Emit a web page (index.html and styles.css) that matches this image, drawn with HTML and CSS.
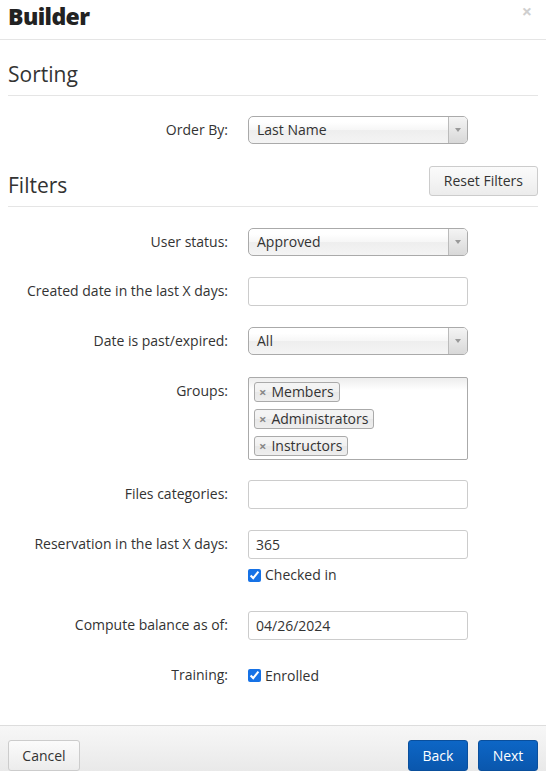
FILE: index.html
```html
<!DOCTYPE html>
<html lang="en">
<head>
<meta charset="utf-8">
<title>Builder</title>
<link rel="stylesheet" href="styles.css">
</head>
<body>
<div class="modal">
  <div class="modal-header">
    <h1 class="title">Builder</h1>
    <button class="close" type="button">×</button>
  </div>
  <div class="modal-body">
    <div class="section-head sorting"><h2>Sorting</h2></div>
    <div class="row row-order">
      <label class="lbl">Order By:</label>
      <div class="ctl"><div class="select"><span class="val">Last Name</span><span class="arrow"><b></b></span></div></div>
    </div>

    <div class="section-head filters"><h2>Filters</h2><button class="btn reset" type="button">Reset Filters</button></div>

    <div class="row">
      <label class="lbl">User status:</label>
      <div class="ctl"><div class="select"><span class="val">Approved</span><span class="arrow"><b></b></span></div></div>
    </div>
    <div class="row">
      <label class="lbl">Created date in the last X days:</label>
      <div class="ctl"><input class="input" type="text" value=""></div>
    </div>
    <div class="row row-date">
      <label class="lbl">Date is past/expired:</label>
      <div class="ctl"><div class="select"><span class="val">All</span><span class="arrow"><b></b></span></div></div>
    </div>
    <div class="row row-groups">
      <label class="lbl">Groups:</label>
      <div class="ctl">
        <div class="multi">
          <span class="tag"><i>×</i>Members</span>
          <span class="tag"><i>×</i>Administrators</span>
          <span class="tag"><i>×</i>Instructors</span>
        </div>
      </div>
    </div>
    <div class="row">
      <label class="lbl">Files categories:</label>
      <div class="ctl"><input class="input" type="text" value=""></div>
    </div>
    <div class="row">
      <label class="lbl">Reservation in the last X days:</label>
      <div class="ctl">
        <input class="input" type="text" value="365">
        <label class="check sub"><input type="checkbox" checked><span>Checked in</span></label>
      </div>
    </div>
    <div class="row">
      <label class="lbl">Compute balance as of:</label>
      <div class="ctl"><input class="input" type="text" value="04/26/2024"></div>
    </div>
    <div class="row row-training">
      <label class="lbl">Training:</label>
      <div class="ctl"><label class="check inline"><input type="checkbox" checked><span>Enrolled</span></label></div>
    </div>
  </div>
  <div class="modal-footer">
    <button class="btn cancel" type="button">Cancel</button>
    <div class="right">
      <button class="btn primary" type="button">Back</button>
      <button class="btn primary" type="button">Next</button>
    </div>
  </div>
</div>
</body>
</html>
```

FILE: styles.css
```css
* { box-sizing: border-box; }
html, body { margin: 0; padding: 0; }
body {
  font-family: "Open Sans", "Liberation Sans", sans-serif;
  font-size: 14px;
  color: #333;
  background: #fff;
}
.modal {
  display: flex;
  flex-direction: column;
  min-height: 100vh;
}
.modal-header {
  display: flex;
  justify-content: space-between;
  align-items: flex-start;
  padding: 0 8px 0 8px;
  height: 40px;
  border-bottom: 1px solid #e5e5e5;
}
.title {
  margin: 0;
  font-size: 23px;
  font-weight: 800;
  line-height: 32px;
  color: #222;
  letter-spacing: -0.6px;
}
.close {
  border: 0;
  background: none;
  padding: 0;
  margin: 1px 6px 0 0;
  font-family: "Open Sans", "Liberation Sans", sans-serif;
  font-size: 18px;
  font-weight: 700;
  line-height: 20px;
  color: #cfcfcf;
}
.modal-body {
  flex: 1;
  padding: 0 8px;
}
.section-head {
  display: flex;
  justify-content: space-between;
  align-items: flex-start;
  padding-bottom: 6px;
  border-bottom: 1px solid #e5e5e5;
}
.section-head h2 {
  margin: 4px 0 0 0;
  font-size: 21px;
  font-weight: 400;
  line-height: 30px;
  color: #333;
}
.section-head.sorting { margin-top: 15px; margin-bottom: 20px; }
.section-head.filters { margin-bottom: 21px; }
.row {
  display: grid;
  grid-template-columns: 220px 220px;
  column-gap: 20px;
  align-items: start;
  margin-bottom: 21px;
}
.row-order { margin-bottom: 22px; }
.row-date { margin-bottom: 22px; }
.row-groups { margin-bottom: 20px; }
.lbl {
  text-align: right;
  line-height: 20px;
  padding-top: 4px;
  color: #333;
}
.ctl {
  display: flex;
  flex-direction: column;
  align-items: stretch;
}
.select {
  display: flex;
  align-items: center;
  height: 28px;
  border: 1px solid #aaa;
  border-radius: 5px;
  background: linear-gradient(#fff 20%, #f6f6f6 50%, #eee 52%, #f4f4f4 100%);
  overflow: hidden;
}
.select .val {
  flex: 1;
  padding-left: 8px;
  line-height: 20px;
  color: #333;
}
.select .arrow {
  width: 19px;
  align-self: stretch;
  border-left: 1px solid #bbb;
  background: linear-gradient(#f4f4f4, #d8d8d8);
  display: flex;
  align-items: center;
  justify-content: center;
}
.select .arrow b {
  width: 0;
  height: 0;
  border-left: 3px solid transparent;
  border-right: 3px solid transparent;
  border-top: 4px solid #999;
}
.input {
  display: block;
  width: 100%;
  height: 29px;
  border: 1px solid #ccc;
  border-radius: 3px;
  padding: 0 7px;
  font-family: "Open Sans", "Liberation Sans", sans-serif;
  font-size: 14px;
  color: #333;
  background: #fff;
  outline: none;
}
.multi {
  display: flex;
  flex-direction: column;
  align-items: flex-start;
  gap: 7px;
  height: 83px;
  padding: 4px 5px 0 5px;
  border: 1px solid #aaa;
  border-radius: 2px;
  background: linear-gradient(#eee 1%, #fff 15%);
}
.tag {
  display: inline-flex;
  align-items: center;
  height: 20px;
  padding: 0 5px 0 4px;
  border: 1px solid #aaa;
  border-radius: 3px;
  background: linear-gradient(#f4f4f4 20%, #f0f0f0 50%, #e8e8e8 52%, #eee 100%);
  line-height: 18px;
  color: #333;
}
.tag i {
  font-style: normal;
  font-weight: 700;
  font-size: 13px;
  color: #888;
  margin-right: 5px;
}
.check {
  display: flex;
  align-items: center;
  gap: 4px;
  line-height: 22px;
  color: #333;
}
.check input {
  margin: 0;
  width: 13px;
  height: 13px;
  accent-color: #1672e6;
}
.check.sub { margin-top: 5px; margin-bottom: 4px; }
.check.inline { height: 29px; padding-top: 0; }
.btn {
  font-family: "Open Sans", "Liberation Sans", sans-serif;
  font-size: 14px;
  line-height: 20px;
  padding: 4px 12px;
  height: 30px;
  border: 1px solid #ccc;
  border-radius: 3px;
  background: linear-gradient(#fbfbfb, #ececec);
  color: #333;
}
.btn.reset { padding: 4px 14px; }
.modal-footer {
  height: 46px;
  display: flex;
  justify-content: space-between;
  align-items: flex-start;
  padding: 14px 8px 0 8px;
  border-top: 1px solid #ddd;
  background: linear-gradient(#f7f7f7, #e9e9e9);
}
.modal-footer .btn { height: 31px; }
.btn.cancel { padding: 4px 13px; width: 72px; }
.right { display: flex; gap: 10px; }
.btn.primary {
  border-color: #0a4f9c;
  background: linear-gradient(#0d66c6, #0a57ad);
  color: #fff;
  width: 60px;
  padding: 4px 0;
}
```
